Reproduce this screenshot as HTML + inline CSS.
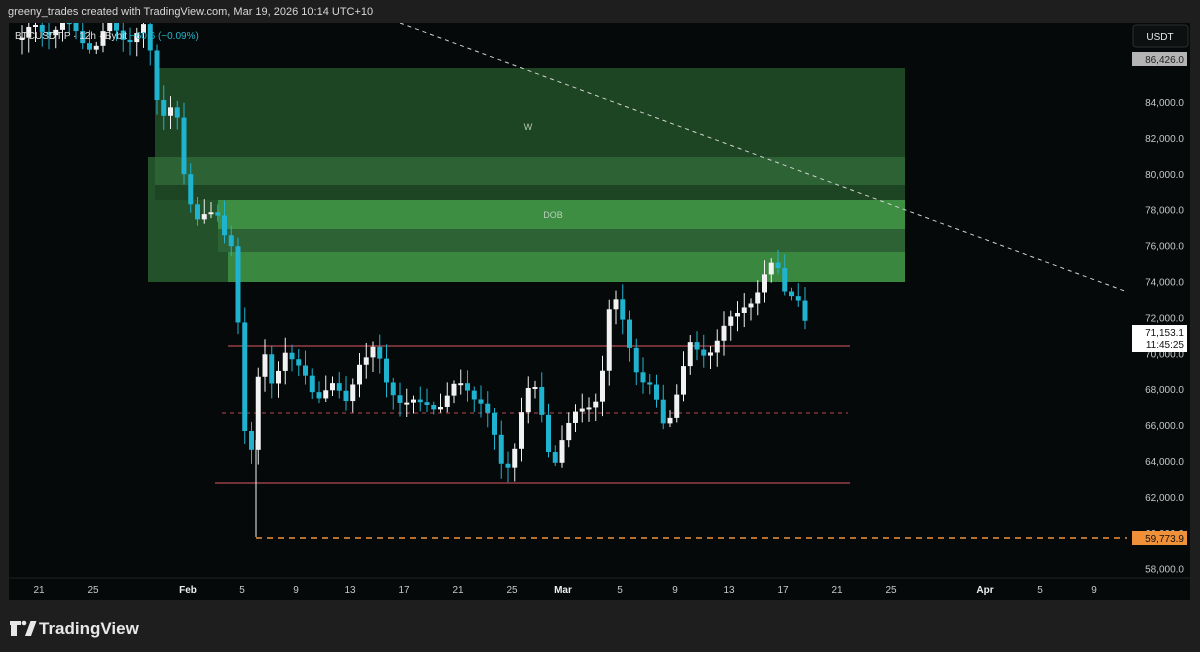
<!DOCTYPE html>
<html><head><meta charset="utf-8">
<style>
html,body{margin:0;padding:0;background:#1e1e1e;width:1200px;height:652px;overflow:hidden;font-family:"Liberation Sans",sans-serif}
.hdr{position:absolute;left:8px;top:6px;font-size:11px;color:#d8d8d8}
svg{position:absolute;left:0;top:0}
</style></head><body>
<div class="hdr">greeny_trades created with TradingView.com, Mar 19, 2026 10:14 UTC+10</div>
<svg width="1200" height="652" xmlns="http://www.w3.org/2000/svg" font-family="Liberation Sans, sans-serif">
<defs><clipPath id="c"><rect x="9" y="23" width="1118" height="555"/></clipPath></defs>
<rect x="9" y="23" width="1181" height="577" fill="#050909"/>
<g clip-path="url(#c)">
<rect x="155" y="68" width="750" height="89" fill="#1e4523"/>
<rect x="148" y="157" width="757" height="125" fill="#23512a"/>
<rect x="155" y="157" width="750" height="28" fill="#2d6234"/>
<rect x="155" y="185" width="750" height="15" fill="#1e4523"/>
<rect x="218" y="200" width="687" height="29" fill="#3d8d42"/>
<rect x="218" y="229" width="687" height="23" fill="#2d6234"/>
<rect x="228" y="252" width="677" height="30" fill="#3a883f"/>
<text x="528" y="130" fill="#b8c8b8" font-size="9" text-anchor="middle">W</text>
<text x="553" y="218" fill="#b8d0b8" font-size="9" text-anchor="middle">DOB</text>
<line x1="400" y1="23" x2="1130" y2="293" stroke="#cfd3d3" stroke-width="1" stroke-dasharray="4,4"/>
<line x1="228" y1="346" x2="850" y2="346" stroke="#b34a52" stroke-width="1.2"/>
<line x1="222" y1="413" x2="848" y2="413" stroke="#b34a52" stroke-width="1" stroke-dasharray="4,4"/>
<line x1="215" y1="483" x2="850" y2="483" stroke="#b34a52" stroke-width="1.2"/>
<line x1="256" y1="538" x2="1127" y2="538" stroke="#f0913a" stroke-width="1.5" stroke-dasharray="6,5"/>
<line x1="256" y1="440" x2="256" y2="537" stroke="#f2f2f2" stroke-width="1"/>
<g id="cd"></g>
</g>
<text x="15" y="39" fill="#e0e0e0" font-size="10">BTCUSDT.P · 12h · Bybit <tspan fill="#26b5c9">−60.6 (−0.09%)</tspan></text>
<line x1="9" y1="578" x2="1190" y2="578" stroke="#1e2424"/>
<g fill="#c8c8c8" font-size="10" text-anchor="end" id="pa"></g>
<rect x="1133" y="25" width="55" height="22" rx="3" fill="#0c1010" stroke="#2a2e2e"/>
<text x="1160" y="40" fill="#e8e8e8" font-size="10" text-anchor="middle">USDT</text>
<rect x="1132" y="52" width="55" height="14" fill="#b4b4b4"/>
<text x="1184" y="63" fill="#222" font-size="10" text-anchor="end">86,426.0</text>
<rect x="1132" y="325" width="55" height="27" fill="#ffffff"/>
<text x="1184" y="336" fill="#111" font-size="10" text-anchor="end">71,153.1</text>
<text x="1184" y="348" fill="#111" font-size="10" text-anchor="end">11:45:25</text>
<rect x="1132" y="531" width="55" height="14" fill="#f0913a"/>
<text x="1184" y="542" fill="#111" font-size="10" text-anchor="end">59,773.9</text>
<g fill="#c8c8c8" font-size="10" text-anchor="middle">
<text x="39" y="593">21</text><text x="93" y="593">25</text><text x="188" y="593" font-weight="bold" fill="#eee">Feb</text><text x="242" y="593">5</text><text x="296" y="593">9</text><text x="350" y="593">13</text><text x="404" y="593">17</text><text x="458" y="593">21</text><text x="512" y="593">25</text><text x="563" y="593" font-weight="bold" fill="#eee">Mar</text><text x="620" y="593">5</text><text x="675" y="593">9</text><text x="729" y="593">13</text><text x="783" y="593">17</text><text x="837" y="593">21</text><text x="891" y="593">25</text><text x="985" y="593" font-weight="bold" fill="#eee">Apr</text><text x="1040" y="593">5</text><text x="1094" y="593">9</text>
</g>
<g fill="#e8e8e8">
<path d="M10 621h11v4h-4v11h-6v-11h-1z"/>
<circle cx="24" cy="623" r="2.3"/>
<path d="M25 636l5.5-15h6l-5.5 15z"/>
</g>
<text x="39" y="634" fill="#e8e8e8" font-size="17" font-weight="bold">TradingView</text>
</svg>
<script>
(function(){
var ns="http://www.w3.org/2000/svg";
var pa=document.getElementById('pa');
for(var k=0;k<=13;k++){var t=document.createElementNS(ns,'text');t.setAttribute('x',1184);t.setAttribute('y',102+k*35.9+4);t.textContent=(84-k*2)+',000.0';pa.appendChild(t);}
var W=[[22,40],[35,30],[60,25],[95,45],[110,30],[130,35],[148,30],[153,90],[162,110],[172,100],[180,130],[185,195],[195,220],[205,205],[215,210],[225,245],[232,250],[240,340],[248,480],[255,415],[262,345],[270,390],[285,345],[300,375],[315,395],[330,380],[345,410],[360,355],[375,350],[385,385],[400,395],[420,410],[440,400],[455,390],[470,390],[480,395],[490,420],[500,470],[508,465],[515,440],[525,390],[535,395],[545,430],[552,465],[560,440],[575,420],[590,400],[600,390],[610,310],[618,305],[628,335],[640,380],[652,395],[665,425],[675,395],[690,350],[700,355],[710,345],[725,330],[735,320],[745,300],[760,290],[770,270],[778,268],[785,285],[792,290],[800,305],[806,333],[811,332]];
function yAt(x){for(var i=0;i<W.length-1;i++){if(x<=W[i+1][0]){var a=W[i],b=W[i+1];return a[1]+(b[1]-a[1])*(x-a[0])/(b[0]-a[0]);}}return W[W.length-1][1];}
var g=document.getElementById('cd'),prev=40;
for(var x=22;x<=811;x+=6.75){
 var c=yAt(x)+Math.sin(x*1.7)*8;var o=prev;
 var bt=Math.min(o,c),bb=Math.max(o,c);if(bb-bt<2)bb=bt+2;
 var hi=bt-3-Math.abs(Math.sin(x*3.1))*12,lo=bb+3+Math.abs(Math.cos(x*2.3))*12;
 var col=c<o?'#f2f2f2':'#1fb3cf';
 var l=document.createElementNS(ns,'line');l.setAttribute('x1',x);l.setAttribute('x2',x);l.setAttribute('y1',hi);l.setAttribute('y2',lo);l.setAttribute('stroke',col);l.setAttribute('stroke-width',1);g.appendChild(l);
 var r=document.createElementNS(ns,'rect');r.setAttribute('x',x-2.5);r.setAttribute('y',bt);r.setAttribute('width',5);r.setAttribute('height',bb-bt);r.setAttribute('fill',col);g.appendChild(r);
 prev=c;}
})();
</script>
</body></html>
